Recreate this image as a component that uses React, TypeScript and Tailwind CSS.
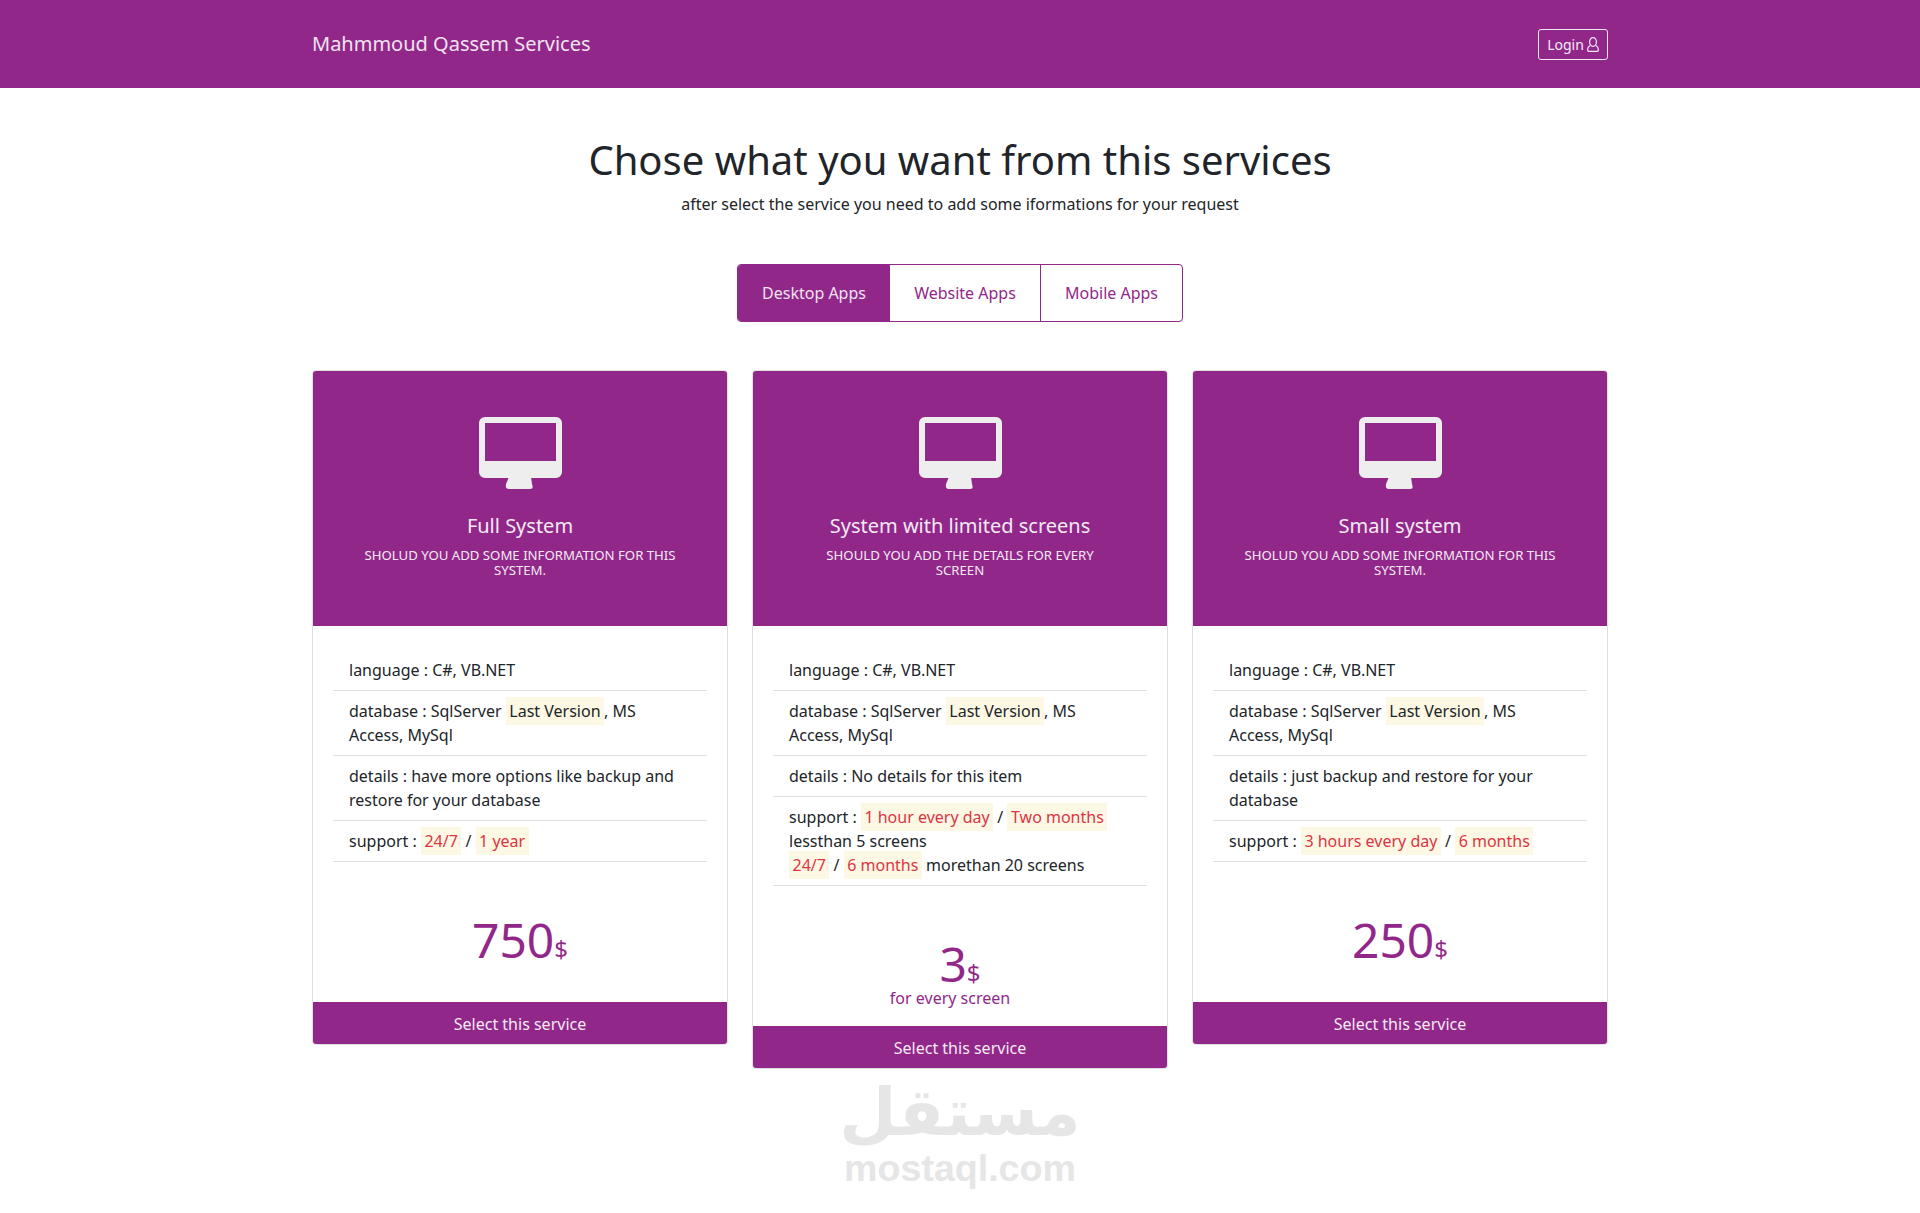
const font = { fontFamily: '"Noto Sans", sans-serif' };

function Mark({ children, red }: { children: React.ReactNode; red?: boolean }) {
  return (
    <span className={`bg-[#fcf8e3] px-[3.5px] py-[3px] ${red ? "text-[#dc3545]" : ""}`}>{children}</span>
  );
}

function MonitorIcon() {
  return (
    <svg width="83" height="72" viewBox="0 0 83 72" className="mx-auto block" fill="#eeeeee">
      <path
        fillRule="evenodd"
        d="M6 0h71a6 6 0 0 1 6 6v49a6 6 0 0 1-6 6H6a6 6 0 0 1-6-6V6a6 6 0 0 1 6-6zM6 6v38h71V6z"
      />
      <path d="M30 60h22l1 7q2 5-2 5H30q-4 0-3-5z" />
    </svg>
  );
}

function PersonIcon() {
  return (
    <svg width="12" height="15" viewBox="0 0 12 15" fill="none" stroke="currentColor" strokeWidth="1.2">
      <ellipse cx="6" cy="5" rx="3.4" ry="4.3" />
      <path d="M3 8.4C1.5 9.4.6 11 .6 12.5v.5q0 1.4 1.4 1.4h8q1.4 0 1.4-1.4v-.5c0-1.5-.9-3.1-2.4-4.1" />
    </svg>
  );
}

function Row({ children }: { children: React.ReactNode }) {
  return <li className="border-b border-[#dfdfdf] px-4 py-2 leading-6">{children}</li>;
}

function Price({ amount }: { amount: string }) {
  return (
    <div className="text-center text-[#92278a] leading-none">
      <span className="text-[48px]">{amount}</span>
      <span className="text-2xl">$</span>
    </div>
  );
}

function Card({
  title,
  sub,
  rows,
  price,
  note,
}: {
  title: string;
  sub: string;
  rows: React.ReactNode[];
  price: string;
  note?: string;
}) {
  return (
    <div className="flex flex-col rounded-[4px] border border-[#dfdfdf] overflow-hidden bg-white">
      <div className="bg-[#92278a] pt-[47px] h-[256px] text-center text-white -mx-px -mt-px">
        <MonitorIcon />
        <h3 className="mt-[22px] text-[20px] leading-[30px] text-[#f4eaf3]">{title}</h3>
        <p className="mt-[7px] px-[50px] text-[13.2px] leading-[15px] uppercase text-[#f4eaf3]">{sub}</p>
      </div>
      <ul className="px-5 pt-[24px]">
        {rows.map((r, i) => (
          <Row key={i}>{r}</Row>
        ))}
      </ul>
      <div className={note ? "pt-[54px] pb-[16px]" : "pt-[54px] pb-[37px]"}>
        <Price amount={price} />
        {note && <div className="text-center pr-5 leading-6 text-[#92278a] -mt-[3px]">{note}</div>}
      </div>
      <button className="-mx-px -mb-px h-[43px] bg-[#92278a] text-center text-[#f4eaf3]">Select this service</button>
    </div>
  );
}

const language = "language : C#, VB.NET";
const database = (
  <>
    database : SqlServer <Mark>Last Version</Mark>, MS Access, MySql
  </>
);

export default function App() {
  return (
    <div style={font} className="min-h-[1213px] bg-white text-[#212529] text-base">
      <nav className="h-[88px] bg-[#92278a]">
        <div className="mx-auto flex h-full w-[1296px] items-center justify-between">
          <span className="text-[20px] text-[#f0e3ef]">Mahmmoud Qassem Services</span>
          <button className="flex h-[31px] w-[70px] items-center justify-center gap-[3px] rounded-[3px] border border-[#f4eaf3] text-[14px] text-[#f4eaf3]">
            Login <PersonIcon />
          </button>
        </div>
      </nav>

      <main className="mx-auto w-[1296px]">
        <h1 className="mt-[48px] text-center text-[40px] leading-[48px]">Chose what you want from this services</h1>
        <p className="mt-[8px] text-center leading-6">after select the service you need to add some iformations for your request</p>

        <div className="mt-[48px] flex justify-center">
          <div className="flex h-[58px] overflow-hidden rounded-[4px] border border-[#92278a] text-[#92278a]">
            <span className="flex w-[152px] items-center justify-center bg-[#92278a] text-[#f0e3ef]">Desktop Apps</span>
            <span className="flex w-[151px] items-center justify-center border-r border-[#92278a]">Website Apps</span>
            <span className="flex w-[141px] items-center justify-center">Mobile Apps</span>
          </div>
        </div>

        <div className="mt-[48px] grid grid-cols-3 items-start gap-6">
          <Card
            title="Full System"
            sub="Sholud you add some information for this system."
            price="750"
            rows={[
              language,
              database,
              "details : have more options like backup and restore for your database",
              <>
                support : <Mark red>24/7</Mark> / <Mark red>1 year</Mark>
              </>,
            ]}
          />
          <Card
            title="System with limited screens"
            sub="Should you add the details for every screen"
            price="3"
            note="for every screen"
            rows={[
              language,
              database,
              "details : No details for this item",
              <>
                support : <Mark red>1 hour every day</Mark> / <Mark red>Two months</Mark>
                <br />
                lessthan 5 screens
                <br />
                <Mark red>24/7</Mark> / <Mark red>6 months</Mark> morethan 20 screens
              </>,
            ]}
          />
          <Card
            title="Small system"
            sub="Sholud you add some information for this system."
            price="250"
            rows={[
              language,
              database,
              "details : just backup and restore for your database",
              <>
                support : <Mark red>3 hours every day</Mark> / <Mark red>6 months</Mark>
              </>,
            ]}
          />
        </div>

        <div className="mt-[5px] text-center text-[#e6e6e6] font-bold">
          <div dir="rtl" className="text-[66px] leading-[78px]" style={{ fontFamily: '"DejaVu Sans", sans-serif' }}>
            مستقل
          </div>
          <div className="text-[37.6px] leading-[32px]" style={{ fontFamily: '"Liberation Sans", sans-serif' }}>
            mostaql.com
          </div>
        </div>
      </main>
    </div>
  );
}
